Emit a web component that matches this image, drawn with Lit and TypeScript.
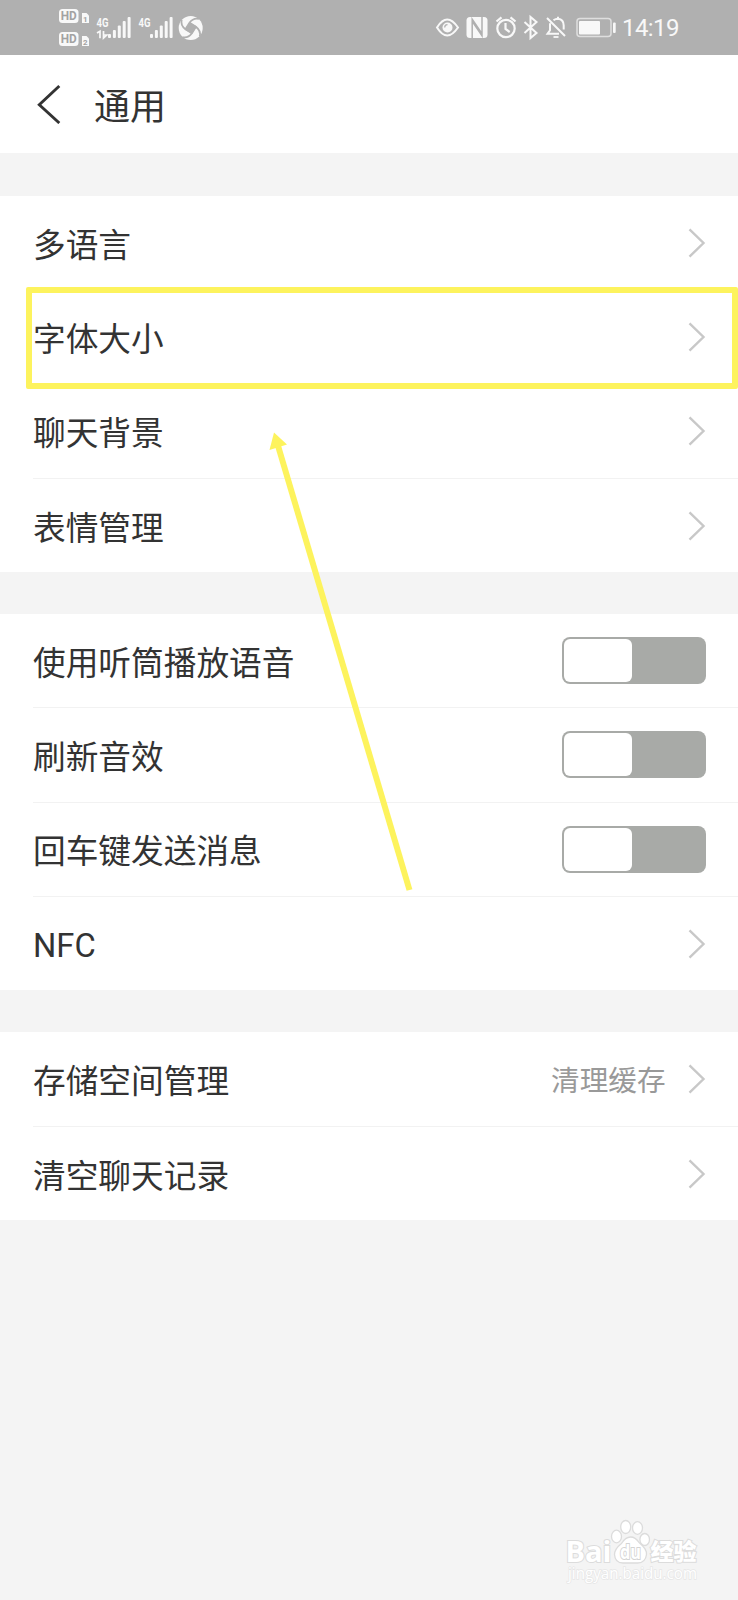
import { LitElement, html, css, svg } from "lit";
import { customElement, property } from "lit/decorators.js";

interface Item {
  label: string;
  kind: "link" | "toggle";
  value?: string;
  marked?: boolean;
  latin?: boolean;
}

const GROUPS: Item[][] = [
  [
    { label: "多语言", kind: "link" },
    { label: "字体大小", kind: "link", marked: true },
    { label: "聊天背景", kind: "link" },
    { label: "表情管理", kind: "link" },
  ],
  [
    { label: "使用听筒播放语音", kind: "toggle" },
    { label: "刷新音效", kind: "toggle" },
    { label: "回车键发送消息", kind: "toggle" },
    { label: "NFC", kind: "link", latin: true },
  ],
  [
    { label: "存储空间管理", kind: "link", value: "清理缓存" },
    { label: "清空聊天记录", kind: "link" },
  ],
];

@customElement("status-bar")
export class StatusBar extends LitElement {
  static styles = css`
    :host {
      display: flex;
      align-items: center;
      box-sizing: border-box;
      height: 55px;
      padding: 0 58px 0 55px;
      background: #b0b0b0;
      color: #f8f8f8;
    }
    svg { display: block; flex: none; }
    .right { margin-left: auto; }
    .time {
      width: 58px;
      margin-left: 4px;
      font: 400 24px/55px Roboto, sans-serif;
      letter-spacing: -0.6px;
      white-space: nowrap;
      padding-top: 1px;
    }
    .net { font: 700 12px "Roboto", sans-serif; fill: #f8f8f8; }
    .hd { font: 700 12px "Roboto", sans-serif; fill: #a2a2a2; }
    .sim { font: 700 8px "Roboto", sans-serif; fill: #a2a2a2; }
  `;

  private hd(y: number, n: string) {
    return svg`
      <rect x="59" y=${y} width="19.5" height="14" rx="3.5" fill="#f8f8f8"/>
      <text class="hd" x="60.8" y=${y + 11.2} textLength="16" lengthAdjust="spacingAndGlyphs">HD</text>
      <path d=${`M82 ${y + 4}h4.500l2.500 2.500v7.500h-7z`} fill="#f8f8f8"/>
      <text class="sim" x="83.100" y=${y + 12.6}>${n}</text>`;
  }

  private bars(x: number) {
    return [0, 1, 2, 3, 4].map((i) => {
      const h = [4, 8, 12.5, 17, 21][i];
      return svg`<rect x=${x + i * 4.9} y=${38 - h} width="3" height=${h} rx="1" fill="#f8f8f8"/>`;
    });
  }

  render() {
    return html`
      <svg width="150" height="55" viewBox="55 0 150 55">
        ${this.hd(9, "1")} ${this.hd(32, "2")}
        <text class="net" x="96.500" y="26.500" textLength="12" lengthAdjust="spacingAndGlyphs">4G</text>
        <path d="M97 33l3-1.800v7M103.500 31v7l3.200-3h-3.200" fill="none" stroke="#f8f8f8" stroke-width="1.700"/>
        ${this.bars(108)}
        <text class="net" x="138.500" y="26.500" textLength="12" lengthAdjust="spacingAndGlyphs">4G</text>
        ${this.bars(150)}
        <circle cx="190.700" cy="28" r="12" fill="#f8f8f8"/>
        <path d="M189.500 22.300L196.600 26.300L192 33.700L184.800 29.700z" fill="#b0b0b0"/>
        ${[0, 90, 180, 270].map(
          (a) => svg`<path transform=${`rotate(${a} 190.7 28)`} fill="none" stroke="#b0b0b0" stroke-width="1.8"
            d="M185.300 29.500L189.500 22.800Q193.500 17.500 199 19"/>`,
        )}
      </svg>
      <svg class="right" width="184" height="55" viewBox="434 0 184 55" fill="none" stroke="#f8f8f8">
        <path d="M437 27.500q10-16 21 0q-11 16-21 0z" stroke-width="2"/>
        <circle cx="447.500" cy="27.500" r="5" fill="#f8f8f8" stroke="none"/>
        <path d="M444.700 27.500a2.800 2.800 0 0 1 2.800-2.800" stroke="#b0b0b0" stroke-width="1.200"/>
        <rect x="466.500" y="17" width="21" height="21" rx="3.500" fill="#f8f8f8" stroke="none"/>
        <path d="M472.200 38V19.200l9.800 14.500M482 17v18.800l-9.800-14.500" stroke="#b0b0b0" stroke-width="1.500"/>
        <circle cx="506" cy="28.500" r="8.700" stroke-width="2.200"/>
        <path d="M505.500 23v6l4.200 3M496.500 21.500l5-4.200M515.500 21.500l-5-4.200" stroke-width="2.200"/>
        <path d="M524.500 22l12 11-6 5V17l6 5-12 11" stroke-width="2"/>
        <path d="M559 33.800h-11.500l2.500-3.500v-7M553.500 20.300q2-1.600 4.500-1.600 5.700.6 5.700 6.800v4M558 18.700v-2M547 18l18 18" stroke-width="2"/>
        <path d="M553.500 37h5" stroke-width="1.800"/>
        <rect x="577" y="18.500" width="34" height="18" rx="3" stroke="#dedede" stroke-width="1.500"/>
        <rect x="579" y="21" width="21" height="13.500" rx="1" fill="#f8f8f8" stroke="none"/>
        <rect x="613" y="22.500" width="2.700" height="10.500" rx="1" fill="#f8f8f8" stroke="none"/>
      </svg>
      <span class="time">14:19</span>
    `;
  }
}

@customElement("setting-row")
export class SettingRow extends LitElement {
  @property({ attribute: false }) item!: Item;

  static styles = css`
    :host { display: block; height: 94.2px; position: relative; }
    :host(:last-child) { height: 93.6px; }
    .row {
      display: flex;
      align-items: center;
      box-sizing: border-box;
      height: 100%;
      margin-left: 33px;
      padding-right: 32.500px;
      border-bottom: 1px solid #f2f2f2;
    }
    :host(:last-child) .row { border-bottom: 0; padding-top: 1px; }
    .label { flex: 1; font-size: 32.700px; color: #333; white-space: nowrap; padding-bottom: 1.200px; }
    .latin { padding: 4px 0 0; }
    .value { font-size: 28.600px; color: #999; margin-right: 22px; padding-bottom: 1px; }
    .chevron { display: block; width: 18px; height: 30px; }
    .toggle {
      box-sizing: border-box;
      width: 144px;
      height: 47px;
      padding: 2px;
      border-radius: 8px;
      background: #a8aaa7;
    }
    .knob { width: 68px; height: 43px; border-radius: 6px; background: #fff; }
    .mark {
      position: absolute;
      z-index: 2;
      box-sizing: border-box;
      left: 25.500px;
      right: 0;
      top: -3px;
      height: 102px;
      border: 6px solid #fdf35d;
      border-radius: 2px;
    }
  `;

  render() {
    const { label, kind, value, marked, latin } = this.item;
    return html`
      <div class="row">
        <span class="label ${latin ? "latin" : ""}">${label}</span>
        ${value ? html`<span class="value">${value}</span>` : ""}
        ${kind === "toggle"
          ? html`<div class="toggle"><div class="knob"></div></div>`
          : html`<svg class="chevron" viewBox="0 0 18 30">
              <path d="M1.500 1.300L15.500 15L1.500 28.700" fill="none" stroke="#c8c8c8" stroke-width="2.400"/>
            </svg>`}
      </div>
      ${marked ? html`<div class="mark"></div>` : ""}
    `;
  }
}

@customElement("app-root")
export class AppRoot extends LitElement {
  static styles = css`
    :host {
      display: block;
      position: relative;
      height: 1600px;
      overflow: hidden;
      background: #f4f4f4;
      font-family: Roboto, "Noto Sans CJK SC", sans-serif;
      color: #333;
    }
    .header {
      display: flex;
      align-items: center;
      gap: 33px;
      height: 98px;
      padding-left: 37px;
      margin-bottom: 43px;
      background: #fff;
    }
    .back { display: block; width: 24px; height: 40px; }
    .title { font-size: 36px; line-height: 98px; padding-top: 7px; }
    .group { background: #fff; margin-bottom: 42px; }
    .arrow { position: absolute; left: 0; top: 0; z-index: 3; }
    .watermark { position: absolute; right: 20px; bottom: 0; }
    .brand {
      font: 700 28px "Open Sans", sans-serif;
      fill: #fff;
      stroke: #dcdcdc;
      stroke-width: 2px;
      paint-order: stroke;
    }
    .cn { font: 900 23px "Noto Sans CJK SC", sans-serif; }
    .du { font: 700 20px "Open Sans", sans-serif; fill: #fff; stroke: #d4d4d4; stroke-width: 2px; paint-order: stroke; }
    .site { font: 400 17px "Open Sans", sans-serif; fill: #fff; stroke: #e6e6e6; stroke-width: 1.500px; paint-order: stroke; }
  `;

  render() {
    return html`
      <status-bar></status-bar>
      <header class="header">
        <svg class="back" viewBox="0 0 24 40">
          <path d="M22.300 2L2.300 20.800L22.300 39" fill="none" stroke="#333" stroke-width="2.900"/>
        </svg>
        <span class="title">通用</span>
      </header>
      ${GROUPS.map(
        (g) => html`<section class="group">
          ${g.map((item) => html`<setting-row .item=${item}></setting-row>`)}
        </section>`,
      )}
      <svg class="arrow" width="738" height="1000" viewBox="0 0 738 1000">
        <path d="M277.500 444L409.500 890" stroke="#fdf35d" stroke-width="6"/>
        <path d="M274 432.500L287 444.500L269.500 450z" fill="#fdf35d"/>
      </svg>
      <svg class="watermark" width="168" height="100" viewBox="550 1500 168 100">
        <text class="brand" x="565.500" y="1561.500" textLength="46" lengthAdjust="spacingAndGlyphs">Bai</text>
        <g fill="#fff" stroke="#dcdcdc" stroke-width="1.300">
          <ellipse cx="616.500" cy="1536.500" rx="5" ry="6.300"/>
          <ellipse cx="625.700" cy="1527" rx="5" ry="6.500"/>
          <ellipse cx="637.500" cy="1528" rx="5" ry="6.300"/>
          <ellipse cx="644.700" cy="1539.500" rx="4.800" ry="6"/>
          <path d="M630.500 1537q5 0 8.500 5.500 8 6.500 7.500 12-1 8.500-9 8.500h-14.500q-8 0-8.500-8.500 0-5.500 7-11 4-6.500 9-6.500z"/>
        </g>
        <text class="du" x="620" y="1558.500" textLength="21" lengthAdjust="spacingAndGlyphs">du</text>
        <text class="brand cn" x="650.500" y="1560" textLength="46" lengthAdjust="spacingAndGlyphs">经验</text>
        <text class="site" x="568" y="1579" textLength="129" lengthAdjust="spacingAndGlyphs">jingyan.baidu.com</text>
      </svg>
    `;
  }
}
